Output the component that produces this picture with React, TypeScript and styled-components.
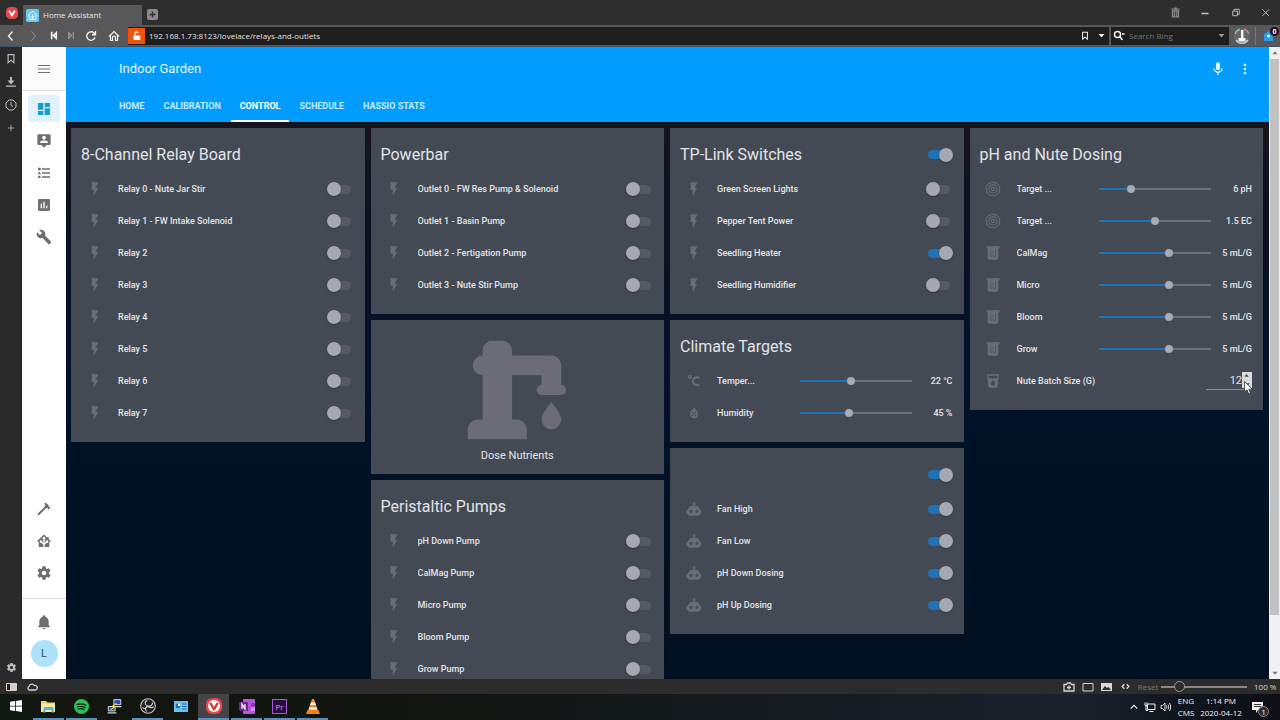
import React, { useState } from "react";
import styled, { createGlobalStyle, css } from "styled-components";

const GlobalStyle = createGlobalStyle`
  *, *::before, *::after { box-sizing: border-box; }
  body { margin: 0; background: #001024; font-family: Roboto, "Liberation Sans", sans-serif; }
  button { border: 0; padding: 0; margin: 0; background: none; color: inherit; font: inherit; cursor: pointer; }
  a { color: inherit; text-decoration: none; }
  input { margin: 0; font: inherit; color: inherit; }
  h1, h2 { margin: 0; font-weight: 400; }
  svg { display: block; flex: none; }
`;

const systemFont = `"Open Sans", "Noto Sans", sans-serif`;

const paths = {
  flash: "M7,2V13H10V22L17,10H13L17,2H7Z",
  robot:
    "M12,2A2,2 0 0,1 14,4C14,4.74 13.6,5.39 13,5.73V7H14A7,7 0 0,1 21,14H22A1,1 0 0,1 23,15V18A1,1 0 0,1 22,19H21V20A2,2 0 0,1 19,22H5A2,2 0 0,1 3,20V19H2A1,1 0 0,1 1,18V15A1,1 0 0,1 2,14H3A7,7 0 0,1 10,7H11V5.73C10.4,5.39 10,4.74 10,4A2,2 0 0,1 12,2M7.5,13A2.5,2.5 0 0,0 5,15.5A2.5,2.5 0 0,0 7.5,18A2.5,2.5 0 0,0 10,15.5A2.5,2.5 0 0,0 7.5,13M16.5,13A2.5,2.5 0 0,0 14,15.5A2.5,2.5 0 0,0 16.5,18A2.5,2.5 0 0,0 19,15.5A2.5,2.5 0 0,0 16.5,13Z",
  celsius:
    "M16.5,5C18.05,5 19.5,5.47 20.69,6.28L19.53,9.17C18.73,8.44 17.67,8 16.5,8C14,8 12,10 12,12.5C12,15 14,17 16.5,17C17.53,17 18.47,16.66 19.23,16.08L20.37,18.93C19.24,19.61 17.92,20 16.5,20A7.5,7.5 0 0,1 9,12.5A7.5,7.5 0 0,1 16.5,5M6,3A3,3 0 0,1 9,6A3,3 0 0,1 6,9A3,3 0 0,1 3,6A3,3 0 0,1 6,3M6,5A1,1 0 0,0 5,6A1,1 0 0,0 6,7A1,1 0 0,0 7,6A1,1 0 0,0 6,5Z",
  humidity:
    "M12,3.25C12,3.25 6,10 6,14C6,17.32 8.69,20 12,20A6,6 0 0,0 18,14C18,10 12,3.25 12,3.25M14.47,9.97L15.53,11.03L9.53,17.03L8.47,15.97M9.75,10A1.25,1.25 0 0,1 11,11.25A1.25,1.25 0 0,1 9.75,12.5A1.25,1.25 0 0,1 8.5,11.25A1.25,1.25 0 0,1 9.75,10M14.25,14.5A1.25,1.25 0 0,1 15.5,15.75A1.25,1.25 0 0,1 14.25,17A1.25,1.25 0 0,1 13,15.75A1.25,1.25 0 0,1 14.25,14.5Z",
  target:
    "M12,1A11,11 0 1,0 12,23A11,11 0 1,0 12,1M12,2.6A9.4,9.4 0 1,1 12,21.4A9.4,9.4 0 1,1 12,2.6M12,5A7,7 0 1,0 12,19A7,7 0 1,0 12,5M12,6.6A5.4,5.4 0 1,1 12,17.4A5.4,5.4 0 1,1 12,6.6M12,8.8A3.2,3.2 0 1,0 12,15.2A3.2,3.2 0 1,0 12,8.8M12,10.4A1.6,1.6 0 1,1 12,13.6A1.6,1.6 0 1,1 12,10.4Z",
  beaker:
    "M2,2H22V4A2,2 0 0,0 20,6V20A2,2 0 0,1 18,22H6A2,2 0 0,1 4,20V6A2,2 0 0,0 2,4V2M7,7V8H11V7H7M7,10V11H14V10H7M7,13V14H11V13H7M7,16V17H14V16H7M15.5,6V19H16.5V6H15.5Z",
  cup: "M18.32,8H5.67L5.23,4H18.77M12,19A3,3 0 0,1 9,16C9,14 12,10.6 12,10.6C12,10.6 15,14 15,16A3,3 0 0,1 12,19M3,2L5,20.23C5.13,21.23 5.97,22 7,22H17C18,22 18.87,21.23 19,20.23L21,2H3Z",
  pump: "M19,14.5C19,14.5 21,16.67 21,18A2,2 0 0,1 19,20A2,2 0 0,1 17,18C17,16.67 19,14.5 19,14.5M5,18V9A2,2 0 0,1 3,7A2,2 0 0,1 5,5V4A2,2 0 0,1 7,2H9A2,2 0 0,1 11,4V5H19A2,2 0 0,1 21,7V9L21,11A1,1 0 0,1 22,12A1,1 0 0,1 21,13H17A1,1 0 0,1 16,12A1,1 0 0,1 17,11V9H11V18H12A2,2 0 0,1 14,20V22H2V20A2,2 0 0,1 4,18H5Z",
  menu: "M3,6H21V7.6H3V6M3,11.2H21V12.8H3V11.2M3,16.4H21V18H3V16.4Z",
  dashboard: "M13,3V9H21V3M13,21H21V11H13M3,21H11V15H3M3,13H11V3H3V13Z",
  account:
    "M20,2H4A2,2 0 0,0 2,4V16A2,2 0 0,0 4,18H8L12,22L16,18H20A2,2 0 0,0 22,16V4A2,2 0 0,0 20,2M12,4.3C13.5,4.3 14.7,5.5 14.7,7C14.7,8.5 13.5,9.7 12,9.7C10.5,9.7 9.3,8.5 9.3,7C9.3,5.5 10.5,4.3 12,4.3M18,15H6V14.1C6,12.1 10,11 12,11C14,11 18,12.1 18,14.1V15Z",
  list: "M5,9.5L7.5,14H2.5L5,9.5M3,4H7V8H3V4M5,20A2,2 0 0,0 7,18A2,2 0 0,0 5,16A2,2 0 0,0 3,18A2,2 0 0,0 5,20M9,5V7H21V5H9M9,19H21V17H9V19M9,13H21V11H9V13Z",
  chart:
    "M17,17H15V13H17M13,17H11V7H13M9,17H7V10H9M19,3H5C3.89,3 3,3.89 3,5V19A2,2 0 0,0 5,21H19A2,2 0 0,0 21,19V5C21,3.89 20.1,3 19,3Z",
  wrench:
    "M22.7,19L13.6,9.9C14.5,7.6 14,4.9 12.1,3C10.1,1 7.1,0.6 4.7,1.7L9,6L6,9L1.6,4.7C0.4,7.1 0.9,10.1 2.9,12.1C4.8,14 7.5,14.5 9.8,13.6L18.9,22.7C19.3,23.1 19.9,23.1 20.3,22.7L22.6,20.4C23.1,20 23.1,19.3 22.7,19Z",
  hammer:
    "M2,19.63L13.43,8.2L12.72,7.5L14.14,6.07L12,3.89C13.2,2.7 15.09,2.7 16.27,3.89L19.87,7.5L18.45,8.91H21.29L22,9.62L18.45,13.21L17.74,12.5V9.62L16.27,11.04L15.56,10.33L4.13,21.76L2,19.63Z",
  hass: "M21.8,13H20V21H13V17.67L15.79,14.88L16.5,15C17.66,15 18.6,14.06 18.6,12.9C18.6,11.74 17.66,10.8 16.5,10.8A2.1,2.1 0 0,0 14.4,12.9L14.5,13.61L13,15.13V9.65C13.66,9.29 14.1,8.6 14.1,7.8A2.1,2.1 0 0,0 12,5.7A2.1,2.1 0 0,0 9.9,7.8C9.9,8.6 10.34,9.29 11,9.65V15.13L9.5,13.61L9.6,12.9A2.1,2.1 0 0,0 7.5,10.8A2.1,2.1 0 0,0 5.4,12.9A2.1,2.1 0 0,0 7.5,15L8.21,14.88L11,17.67V21H4V13H2.25C1.83,13 1.42,13 1.42,12.79C1.43,12.57 1.85,12.15 2.28,11.72L11,3C11.33,2.67 11.67,2.33 12,2.33C12.33,2.33 12.67,2.67 13,3L17,7V6H19V9L21.78,11.78C22.18,12.18 22.59,12.59 22.6,12.8C22.6,13 22.2,13 21.8,13Z",
  gear: "M12,15.5A3.5,3.5 0 0,1 8.5,12A3.5,3.5 0 0,1 12,8.5A3.5,3.5 0 0,1 15.5,12A3.5,3.5 0 0,1 12,15.5M19.43,12.97C19.47,12.65 19.5,12.33 19.5,12C19.5,11.67 19.47,11.34 19.43,11L21.54,9.37C21.73,9.22 21.78,8.95 21.66,8.73L19.66,5.27C19.54,5.05 19.27,4.96 19.05,5.05L16.56,6.05C16.04,5.66 15.5,5.32 14.87,5.07L14.5,2.42C14.46,2.18 14.25,2 14,2H10C9.75,2 9.54,2.18 9.5,2.42L9.13,5.07C8.5,5.32 7.96,5.66 7.44,6.05L4.95,5.05C4.73,4.96 4.46,5.05 4.34,5.27L2.34,8.73C2.21,8.95 2.27,9.22 2.46,9.37L4.57,11C4.53,11.34 4.5,11.67 4.5,12C4.5,12.33 4.53,12.65 4.57,12.97L2.46,14.63C2.27,14.78 2.21,15.05 2.34,15.27L4.34,18.73C4.46,18.95 4.73,19.03 4.95,18.95L7.44,17.94C7.96,18.34 8.5,18.68 9.13,18.93L9.5,21.58C9.54,21.82 9.75,22 10,22H14C14.25,22 14.46,21.82 14.5,21.58L14.87,18.93C15.5,18.67 16.04,18.34 16.56,17.94L19.05,18.95C19.27,19.03 19.54,18.95 19.66,18.73L21.66,15.27C21.78,15.05 21.73,14.78 21.54,14.63L19.43,12.97Z",
  bell: "M21,19V20H3V19L5,17V11C5,7.9 7.03,5.17 10,4.29C10,4.19 10,4.1 10,4A2,2 0 0,1 12,2A2,2 0 0,1 14,4C14,4.1 14,4.19 14,4.29C16.97,5.17 19,7.9 19,11V17L21,19M14,21A2,2 0 0,1 12,23A2,2 0 0,1 10,21",
  mic: "M12,2A3,3 0 0,1 15,5V11A3,3 0 0,1 12,14A3,3 0 0,1 9,11V5A3,3 0 0,1 12,2M19,11C19,14.53 16.39,17.44 13,17.93V21H11V17.93C7.61,17.44 5,14.53 5,11H7A5,5 0 0,0 12,16A5,5 0 0,0 17,11H19Z",
  dots: "M12,16A2,2 0 0,1 14,18A2,2 0 0,1 12,20A2,2 0 0,1 10,18A2,2 0 0,1 12,16M12,10A2,2 0 0,1 14,12A2,2 0 0,1 12,14A2,2 0 0,1 10,12A2,2 0 0,1 12,10M12,4A2,2 0 0,1 14,6A2,2 0 0,1 12,8A2,2 0 0,1 10,6A2,2 0 0,1 12,4Z",
  triangle: "M4,8H20L12,17Z",
  bookmark: "M5,2H19V22L12,16L5,22V2M7.4,4.4V17L12,13L16.6,17V4.4Z",
  download: "M10,2H14V9H19L12,17L5,9H10V2M2,19H22V21.5H2Z",
  trash: "M9,1H15V3H21V6H3V3H9V1M4,7H20V23H4V7M7.5,10V20H9V10H7.5M11.2,10V20H12.8V10H11.2M15,10V20H16.5V10H15Z",
};
type IconName = keyof typeof paths;

const Icon = ({ name, size = 16 }: { name: IconName; size?: number }) => (
  <svg width={size} height={size} viewBox="0 0 24 24" fill="currentColor" fillRule="evenodd" aria-hidden="true">
    <path d={paths[name]} />
  </svg>
);

const StrokeIcon = ({ d, size = 12, width = 2 }: { d: string; size?: number; width?: number }) => (
  <svg width={size} height={size} viewBox="0 0 24 24" fill="none" stroke="currentColor" strokeWidth={width} aria-hidden="true">
    <path d={d} />
  </svg>
);

/* ---------- browser chrome ---------- */

const Shell = styled.div`
  display: grid;
  grid-template-rows: 25px 22px minmax(0, 1fr) 15px 26px;
  height: 100vh;
  overflow: hidden;
`;

const TabStrip = styled.header`
  display: flex;
  align-items: stretch;
  background: #2e2e2e;
  color: #e6e6e6;
  font: 8px/12px ${systemFont};
`;

const BrandButton = styled.button`
  display: grid;
  place-items: center;
  width: 23px;
`;

const BrowserTab = styled.button`
  display: flex;
  align-items: center;
  gap: 4px;
  width: 119px;
  margin-top: 5px;
  padding-left: 3px;
  background: #58585a;
`;

const NewTab = styled.button`
  display: grid;
  place-items: center;
  align-self: center;
  width: 11px;
  height: 11px;
  margin: 4px auto 0 5px;
  border-radius: 2px;
  background: #8b8b8b;
  color: #2e2e2e;
`;

const WindowButton = styled.button<{ $dim?: boolean }>`
  display: grid;
  place-items: center;
  width: 30px;
  color: ${(p) => (p.$dim ? "#8a8a8a" : "#c4c4c4")};
`;

const AddressBar = styled.nav`
  display: flex;
  align-items: center;
  background: #58585a;
  border-bottom: 1px solid #3c5468;
  color: #f4f4f4;
  font: 8px/12px ${systemFont};
`;

const NavButton = styled.button<{ $width: number; $dim?: boolean }>`
  display: grid;
  place-items: center;
  width: ${(p) => p.$width}px;
  height: 18px;
  color: ${(p) => (p.$dim ? "#9a9a9a" : "#f4f4f4")};
`;

const Field = styled.div<{ $grow?: boolean }>`
  display: flex;
  align-items: center;
  height: 18px;
  margin-left: 2px;
  background: #1e1e1e;
  ${(p) =>
    p.$grow
      ? css`
          flex: 1;
        `
      : css`
          width: 118px;
          padding-left: 2px;
        `}
`;

const FieldInput = styled.input`
  flex: 1;
  min-width: 0;
  height: 16px;
  margin-left: 4px;
  padding: 0;
  border: 0;
  outline: 0;
  background: transparent;
  color: #e2e2e2;
  &::placeholder {
    color: #777;
    opacity: 1;
  }
`;

const SecurityBadge = styled.button`
  display: grid;
  place-items: center;
  width: 17px;
  height: 16px;
  background: #ee5410;
`;

const Portrait = styled.button`
  width: 16px;
  height: 16px;
  margin: 0 5px;
`;

const Extension = styled.button`
  position: relative;
  display: grid;
  place-items: center;
  width: 25px;
  height: 18px;
  border-left: 1px solid #77777a;
  color: #2b9be6;
`;

const ExtensionBadge = styled.span`
  position: absolute;
  top: 0;
  right: 1px;
  width: 9px;
  height: 9px;
  border-radius: 50%;
  background: #1d0b26;
  color: #fff;
  font: 700 7px/9px ${systemFont};
  text-align: center;
`;

const Middle = styled.div`
  display: grid;
  grid-template-columns: 22px 44px minmax(0, 1fr) 11px;
  min-height: 0;
`;

const Panel = styled.aside`
  display: flex;
  flex-direction: column;
  background: #2a2a2a;
  color: #bdbdbd;
`;

const PanelButton = styled.button<{ $bottom?: boolean }>`
  display: grid;
  place-items: center;
  height: 23px;
  ${(p) => p.$bottom && "margin-top: auto;"}
`;

const ScrollBar = styled.div`
  display: flex;
  flex-direction: column;
  align-items: center;
  background: #f1f1f1;
  color: #7a7a7a;
`;

const ScrollArrow = styled.button<{ $down?: boolean }>`
  display: grid;
  place-items: center;
  height: 12px;
  ${(p) => (p.$down ? "margin-top: auto;" : "transform: rotate(180deg);")}
`;

const ScrollThumb = styled.div`
  width: 9px;
  height: 88%;
  background: #c1c1c1;
`;

/* ---------- dashboard ---------- */

const Sidebar = styled.nav`
  display: flex;
  flex-direction: column;
  align-items: center;
  background: #fff;
  color: #6f6f6f;
`;

const SidebarTop = styled.div`
  display: grid;
  place-items: center;
  width: 100%;
  height: 44px;
  margin-bottom: 4px;
  background: #fafafa;
  border-bottom: 1px solid #dedede;
`;

const SidebarGroup = styled.div<{ $footer?: boolean }>`
  display: flex;
  flex-direction: column;
  align-items: center;
  gap: 5px;
  width: 100%;
  ${(p) =>
    p.$footer
      ? css`
          margin-top: 12px;
          padding: 9px 0 12px;
          border-top: 1px solid #dedede;
        `
      : css`
          &:nth-child(2) {
            margin-bottom: auto;
          }
        `}
`;

const SidebarLink = styled.a<{ $active?: boolean }>`
  display: grid;
  place-items: center;
  width: 32px;
  height: 27px;
  border-radius: 3px;
  background: ${(p) => (p.$active ? "#e0f3fd" : "transparent")};
  color: ${(p) => (p.$active ? "#149fd0" : "inherit")};
`;

const Avatar = styled.a`
  width: 27px;
  height: 27px;
  border-radius: 50%;
  background: #aee1fa;
  color: #33505e;
  font-size: 11px;
  line-height: 27px;
  text-align: center;
`;

const View = styled.main`
  display: flex;
  flex-direction: column;
  min-width: 0;
  min-height: 0;
  overflow: hidden;
  background: linear-gradient(#232429, #1b151d 30px, #0c1220 170px, #04112a 320px, #001226 400px, #001020);
`;

const ViewHeader = styled.header`
  flex: none;
  background: #019cfe;
  color: #e0f8ff;
`;

const Toolbar = styled.div`
  display: flex;
  align-items: center;
  height: 43px;
  padding: 0 11px 0 53px;
`;

const ViewTitle = styled.h1`
  flex: 1;
  font-size: 13px;
  line-height: 16px;
`;

const ToolButton = styled.button`
  display: grid;
  place-items: center;
  width: 27px;
  height: 27px;
`;

const Tabs = styled.nav`
  display: flex;
  gap: 1px;
  height: 32px;
  padding-left: 44px;
`;

const Tab = styled.a<{ $active?: boolean }>`
  padding: 0 9px;
  border-bottom: 2px solid ${(p) => (p.$active ? "#fff" : "transparent")};
  color: ${(p) => (p.$active ? "#fff" : "#c4ecff")};
  font-size: 9px;
  font-weight: 700;
  line-height: 32px;
  text-transform: uppercase;
`;

const Columns = styled.div`
  display: grid;
  grid-template-columns: repeat(4, minmax(0, 1fr));
  align-items: start;
  gap: 6px;
  padding: 6px 6px 6px 5px;
`;

const Column = styled.div`
  display: grid;
  gap: 6px;
`;

const Card = styled.section`
  padding-bottom: 13px;
  background: #444a54;
  color: #e3e4e8;
  font-size: 9px;
  line-height: 12px;
`;

const CardHeader = styled.div`
  display: flex;
  align-items: center;
  justify-content: space-between;
  height: 45px;
  padding: 8px 11px 0 10px;
`;

const CardTitle = styled.h2`
  font-size: 16px;
  line-height: 24px;
`;

const Row = styled.label`
  display: flex;
  align-items: center;
  height: 32px;
  padding: 0 11px 0 10px;
  font-weight: 500;
`;

const RowIcon = styled.span`
  display: grid;
  place-items: center;
  width: 27px;
  margin-right: 10px;
  color: #6b6c76;
`;

const RowName = styled.span`
  flex: 1;
  min-width: 0;
  overflow: hidden;
  text-overflow: ellipsis;
  white-space: nowrap;
`;

const Switch = styled.input.attrs({ type: "checkbox" })`
  appearance: none;
  display: grid;
  grid-template-columns: 27px;
  align-items: center;
  height: 14px;
  cursor: pointer;
  &::before,
  &::after {
    content: "";
    grid-area: 1 / 1;
  }
  &::before {
    justify-self: center;
    width: 22px;
    height: 9px;
    border-radius: 5px;
    background: #575a65;
  }
  &::after {
    width: 14px;
    height: 14px;
    border-radius: 50%;
    background: #a7a7b0;
    box-shadow: 0 1px 2px rgba(0, 0, 0, 0.35);
  }
  &:checked::before {
    background: #1e71b4;
  }
  &:checked::after {
    justify-self: end;
  }
`;

const Slider = styled.input.attrs({ type: "range" })`
  appearance: none;
  width: 112px;
  height: 14px;
  background: transparent;
  &::-webkit-slider-runnable-track {
    height: 2px;
    background: linear-gradient(90deg, #2272b4 var(--fill), #6e6f78 var(--fill));
  }
  &::-webkit-slider-thumb {
    appearance: none;
    width: 8px;
    height: 8px;
    margin-top: -3px;
    border-radius: 50%;
    background: #a7a9b3;
  }
`;

const SliderValue = styled.output`
  width: 41px;
  text-align: right;
  white-space: nowrap;
`;

const NumberBox = styled.span`
  position: relative;
  display: flex;
  align-items: flex-start;
  width: 46px;
  height: 18px;
  border-bottom: 1px solid #8b8d95;
`;

const NumberInput = styled.input.attrs({ type: "number" })`
  appearance: textfield;
  flex: 1;
  min-width: 0;
  height: 16px;
  padding: 0;
  border: 0;
  outline: 0;
  background: transparent;
  font-size: 11px;
  font-weight: 400;
  text-align: right;
  &::-webkit-inner-spin-button {
    display: none;
  }
`;

const Spinner = styled.span`
  display: grid;
  grid-template-rows: 1fr 1fr;
  width: 10px;
  height: 16px;
  background: #dcdcdc;
  color: #555;
`;

const SpinButton = styled.button<{ $up?: boolean }>`
  display: grid;
  place-items: center;
  ${(p) => p.$up && "transform: rotate(180deg);"}
`;

const Pointer = styled.span`
  position: absolute;
  top: 9px;
  left: 38px;
`;

const ButtonCard = styled.button`
  display: grid;
  justify-items: center;
  padding: 11px;
  background: #444a54;
  color: #e3e4e8;
  font-size: 11px;
  line-height: 14px;
  & > svg {
    color: #6b6c76;
  }
`;

/* ---------- bottom bars ---------- */

const StatusBar = styled.footer`
  display: flex;
  align-items: center;
  background: #2c2c2c;
  color: #d6d6d6;
  font: 8px/12px ${systemFont};
`;

const StatusButton = styled.button<{ $width: number }>`
  display: grid;
  place-items: center;
  width: ${(p) => p.$width}px;
`;

const StatusSpacer = styled.span`
  flex: 1;
`;

const ResetButton = styled.button`
  width: 26px;
  color: #7b7b7b;
`;

const Zoom = styled.input.attrs({ type: "range" })`
  appearance: none;
  width: 86px;
  height: 12px;
  background: transparent;
  &::-webkit-slider-runnable-track {
    height: 2px;
    background: #8f8787;
  }
  &::-webkit-slider-thumb {
    appearance: none;
    width: 11px;
    height: 11px;
    margin-top: -5px;
    border: 1px solid #a09a9a;
    border-radius: 50%;
    background: #2c2c2c;
  }
`;

const ZoomValue = styled.output`
  width: 33px;
  padding-left: 7px;
  white-space: nowrap;
`;

const TaskBar = styled.footer`
  display: flex;
  background: linear-gradient(90deg, #111712, #12150f 30%, #141a20 60%, #1a212b 84%, #11161e 92%, #0c1016);
  color: #f2f2f2;
  font: 8px/12px ${systemFont};
`;

const TaskButton = styled.button<{ $running?: boolean; $active?: boolean }>`
  display: grid;
  place-items: center;
  width: 31px;
  margin-right: 2px;
  background: ${(p) => (p.$active ? "#444446" : "transparent")};
  border-bottom: 2px solid ${(p) => (p.$running ? "#5a8fbf" : "transparent")};
`;

const Tray = styled.div`
  display: flex;
  align-items: center;
  margin-left: auto;
`;

const TrayButton = styled.button`
  display: grid;
  place-items: center;
  width: 16px;
`;

const TrayText = styled.div<{ $width: number }>`
  width: ${(p) => p.$width}px;
  text-align: center;
  white-space: nowrap;
`;

const Notifications = styled.button`
  position: relative;
  width: 36px;
  padding-left: 8px;
`;

const NotificationBadge = styled.span`
  position: absolute;
  top: 4px;
  left: 14px;
  width: 11px;
  height: 11px;
  border-radius: 50%;
  border: 1px solid #8a8a8a;
  background: #2b2b2d;
  font-size: 8px;
  line-height: 9px;
`;

/* ---------- drawings ---------- */

const VivaldiLogo = ({ size }: { size: number }) => (
  <svg width={size} height={size} viewBox="0 0 24 24" aria-hidden="true">
    <rect width="24" height="24" rx="9" fill="#e8464a" />
    <circle cx="12" cy="12" r="9" fill={size > 13 ? "#fff" : "#e8464a"} />
    <path
      d="M7 8.5L12 17L17 8.5"
      fill="none"
      stroke={size > 13 ? "#d63a3e" : "#fff"}
      strokeWidth="3.6"
      strokeLinecap="round"
      strokeLinejoin="round"
    />
  </svg>
);

const appIcons = {
  Start: (
    <svg width="12" height="12" viewBox="0 0 12 12" fill="#fff">
      <path d="M0 1.7L5.2 1V5.7H0ZM6 .9L12 0V5.7H6ZM0 6.4H5.2V11L0 10.3ZM6 6.4H12V12L6 11.1Z" />
    </svg>
  ),
  "File Explorer": (
    <svg width="15" height="13" viewBox="0 0 15 13">
      <path d="M0 1H5L6.5 2.5H14V12H0Z" fill="#f4d478" />
      <path d="M0 4H14V12H0Z" fill="#fbe7a0" />
      <path d="M3 7H12L13 12.5H10.5V10H4.5V12.5H2Z" fill="#56b7d8" />
    </svg>
  ),
  Spotify: (
    <svg width="15" height="15" viewBox="0 0 24 24">
      <circle cx="12" cy="12" r="12" fill="#2ebd59" />
      <path d="M5 8.6C9.5 7.3 15 7.7 19 10M5.8 12.4C9.6 11.4 14 11.8 17.4 13.8M6.6 16C9.8 15.2 13 15.5 15.9 17.2" fill="none" stroke="#10240f" strokeWidth="2" strokeLinecap="round" />
    </svg>
  ),
  PuTTY: (
    <svg width="15" height="15" viewBox="0 0 24 24">
      <path d="M11 1H22V9H11ZM2 12H13V19H2Z" fill="#2b4bb5" stroke="#d5d5d5" strokeWidth="1.6" />
      <path d="M13 11H23V13H13ZM1 21H15V23H1Z" fill="#d5d5d5" />
      <path d="M15 7L8 12H13L6 17" fill="none" stroke="#f3e04a" strokeWidth="1.8" />
    </svg>
  ),
  "OBS Studio": (
    <svg width="16" height="16" viewBox="0 0 24 24">
      <circle cx="12" cy="12" r="11" fill="#1f1f21" stroke="#c9c9c9" strokeWidth="1.6" />
      <path d="M11 4C6.5 5 7 11 11.5 12C15 13 20 10.5 18.5 6.5M11.5 12C8 13 7 17.5 10 20.5M11.5 12C14 14.5 18.5 15.5 20.5 13M3.8 14C6 17 9.5 16 11.5 12" fill="none" stroke="#c9c9c9" strokeWidth="1.7" />
    </svg>
  ),
  "Control Panel": (
    <svg width="14" height="11" viewBox="0 0 14 11">
      <rect width="14" height="11" fill="#6cc2ee" />
      <circle cx="4" cy="5" r="2.4" fill="#1e6fb0" />
      <path d="M4 5V2.6A2.4 2.4 0 0 1 6.4 5Z" fill="#fff" />
      <path d="M8 3H12.5M8 5.5H12.5M8 8H12.5" stroke="#1e6fb0" strokeWidth="1" />
    </svg>
  ),
  Vivaldi: <VivaldiLogo size={16} />,
  OneNote: (
    <svg width="16" height="15" viewBox="0 0 16 15">
      <path d="M4 0H15A1 1 0 0 1 16 1V14A1 1 0 0 1 15 15H4Z" fill="#b558d8" />
      <path d="M12 4H16V8H12Z" fill="#8b3cb8" />
      <path d="M12 8H16V12H12Z" fill="#d08cf0" />
      <rect y="3" width="9" height="9" rx="1" fill="#6d2298" />
      <path d="M3 10V5L6 10V5" fill="none" stroke="#fff" strokeWidth="1.2" />
    </svg>
  ),
  "Premiere Pro": (
    <svg width="15" height="15" viewBox="0 0 15 15">
      <rect x=".5" y=".5" width="14" height="14" fill="#2a0a3a" stroke="#a45bd6" />
      <text x="7.5" y="10.5" fill="#d79bff" fontFamily="Open Sans" fontSize="8" textAnchor="middle">Pr</text>
    </svg>
  ),
  VLC: (
    <svg width="14" height="15" viewBox="0 0 14 15">
      <path d="M6 0H8L12 12H2Z" fill="#f58a1f" />
      <path d="M4.9 3.5H9.1L9.9 6H4.1ZM3.3 8.5H10.7L11.4 10.5H2.6Z" fill="#f4f0ea" />
      <path d="M1.5 11H12.5L14 15H0Z" fill="#f0851a" />
    </svg>
  ),
};

/* ---------- rows ---------- */

const SwitchRow = ({ icon = "flash", name, on = false }: { icon?: IconName; name: string; on?: boolean }) => (
  <Row>
    <RowIcon>
      <Icon name={icon} />
    </RowIcon>
    <RowName>{name}</RowName>
    <Switch defaultChecked={on} />
  </Row>
);

interface SliderRowProps {
  icon: IconName;
  name: string;
  value: string;
  percent: number;
}

const SliderRow = ({ icon, name, value, percent }: SliderRowProps) => {
  const [position, setPosition] = useState(percent);
  return (
    <Row>
      <RowIcon>
        <Icon name={icon} />
      </RowIcon>
      <RowName>{name}</RowName>
      <Slider
        value={position}
        onChange={(e) => setPosition(Number(e.target.value))}
        style={{ "--fill": `${position}%` } as React.CSSProperties}
      />
      <SliderValue>{value}</SliderValue>
    </Row>
  );
};

const navItems: { icon: IconName; label: string }[] = [
  { icon: "dashboard", label: "Overview" },
  { icon: "account", label: "Map" },
  { icon: "list", label: "Logbook" },
  { icon: "chart", label: "History" },
  { icon: "wrench", label: "Configurator" },
];
const toolItems: { icon: IconName; label: string }[] = [
  { icon: "hammer", label: "Developer Tools" },
  { icon: "hass", label: "Supervisor" },
  { icon: "gear", label: "Configuration" },
];
const running = ["File Explorer", "Spotify", "OBS Studio", "Vivaldi", "OneNote", "Premiere Pro", "VLC"];

const App = () => (
  <>
    <GlobalStyle />
    <Shell>
      <TabStrip>
        <BrandButton aria-label="Vivaldi menu">
          <VivaldiLogo size={12} />
        </BrandButton>
        <BrowserTab>
          <svg width="13" height="13" viewBox="0 0 24 24" aria-hidden="true">
            <rect width="24" height="24" rx="3" fill="#6fc4ea" />
            <path d="M12 4L20 12H18V19H6V12H4Z" fill="none" stroke="#fff" strokeWidth="1.6" />
            <path d="M12 18V10M12 16L9 13M12 16L15 13" stroke="#fff" strokeWidth="1.8" />
          </svg>
          Home Assistant
        </BrowserTab>
        <NewTab aria-label="New tab">
          <StrokeIcon d="M12 4V20M4 12H20" size={9} width={4} />
        </NewTab>
        <WindowButton $dim aria-label="Closed tabs">
          <Icon name="trash" size={11} />
        </WindowButton>
        <WindowButton aria-label="Minimize">
          <StrokeIcon d="M5 13H19" width={3} />
        </WindowButton>
        <WindowButton aria-label="Restore">
          <StrokeIcon d="M6 9H16V19H6ZM9 9V5H20V16H16" size={11} />
        </WindowButton>
        <WindowButton aria-label="Close">
          <StrokeIcon d="M5 5L20 20M20 5L5 20" size={11} />
        </WindowButton>
      </TabStrip>

      <AddressBar>
        <NavButton $width={22} aria-label="Back">
          <StrokeIcon d="M15 3L7 12L15 21" width={2.6} />
        </NavButton>
        <NavButton $width={22} $dim aria-label="Forward">
          <StrokeIcon d="M9 3L17 12L9 21" />
        </NavButton>
        <NavButton $width={19} aria-label="Rewind">
          <StrokeIcon d="M8 4V20M18 6L12 12L18 18Z" size={11} width={3.6} />
        </NavButton>
        <NavButton $width={17} $dim aria-label="Fast forward">
          <StrokeIcon d="M16 4V20M6 6L12 12L6 18Z" size={11} width={2.6} />
        </NavButton>
        <NavButton $width={22} aria-label="Reload">
          <StrokeIcon d="M20 15A8.5 8.5 0 1 1 18 6L21 9M21 2V9.5H14" width={2.6} />
        </NavButton>
        <NavButton $width={24} aria-label="Home">
          <StrokeIcon d="M2 13L12 3L22 13M5 11V21H9V15A3 3 0 0 1 15 15V21H19V11" width={2.4} />
        </NavButton>
        <Field $grow>
          <SecurityBadge aria-label="Site information">
            <svg width="9" height="9" viewBox="0 0 12 12" aria-hidden="true">
              <path d="M2 6H11V12H2Z" fill="#fff" />
              <path d="M4 6V3.5A2 2 0 0 1 8 3" fill="none" stroke="#fff" strokeWidth="1.6" />
            </svg>
          </SecurityBadge>
          <FieldInput aria-label="Address" defaultValue="192.168.1.73:8123/lovelace/relays-and-outlets" />
          <NavButton $width={16} aria-label="Bookmark page">
            <Icon name="bookmark" size={10} />
          </NavButton>
          <NavButton $width={16} aria-label="Bookmarks">
            <Icon name="triangle" size={9} />
          </NavButton>
        </Field>
        <Field>
          <StrokeIcon d="M15 9A6 6 0 1 1 3 9A6 6 0 1 1 15 9ZM13 13L19 20M18 8H23" width={3} />
          <FieldInput aria-label="Search" placeholder="Search Bing" />
          <NavButton $width={16} $dim aria-label="Search engines">
            <Icon name="triangle" size={9} />
          </NavButton>
        </Field>
        <Portrait aria-label="Profile">
          <svg width="16" height="16" viewBox="0 0 16 16" aria-hidden="true">
            <circle cx="8" cy="8" r="8" fill="#6a6668" />
            <path d="M1 6A7.2 7.2 0 0 1 6 1.2" fill="none" stroke="#8fc0b4" strokeWidth="1.4" />
            <path d="M10 1.2A7.2 7.2 0 0 1 15 6" fill="none" stroke="#b58aa0" strokeWidth="1.4" />
            <path d="M7 2H9.4V10H11.5V13.5H4.5V10H7Z" fill="#fff" />
            <path d="M2 12A7.2 7.2 0 0 0 14 12" fill="none" stroke="#b8ccc8" strokeWidth="1.6" />
          </svg>
        </Portrait>
        <Extension aria-label="Extension">
          <svg width="9" height="10" viewBox="0 0 9 10" aria-hidden="true">
            <path d="M0 3L4.5 0L9 3V10H0Z" fill="currentColor" />
            <circle cx="4.5" cy="5" r="1.5" fill="#e4f4ff" />
          </svg>
          <ExtensionBadge>0</ExtensionBadge>
        </Extension>
      </AddressBar>

      <Middle>
        <Panel>
          <PanelButton aria-label="Bookmarks">
            <Icon name="bookmark" size={12} />
          </PanelButton>
          <PanelButton aria-label="Downloads">
            <Icon name="download" size={12} />
          </PanelButton>
          <PanelButton aria-label="History">
            <StrokeIcon d="M8 2H16L22 8V16L16 22H8L2 16V8ZM12 6V13L16 15" />
          </PanelButton>
          <PanelButton aria-label="Add web panel">
            <StrokeIcon d="M12 5V19M5 12H19" size={10} />
          </PanelButton>
          <PanelButton $bottom aria-label="Settings">
            <Icon name="gear" size={11} />
          </PanelButton>
        </Panel>

        <Sidebar>
          <SidebarTop>
            <button aria-label="Toggle sidebar">
              <Icon name="menu" />
            </button>
          </SidebarTop>
          <SidebarGroup>
            {navItems.map((item, i) => (
              <SidebarLink key={item.label} href="#" aria-label={item.label} $active={i === 0}>
                <Icon name={item.icon} />
              </SidebarLink>
            ))}
          </SidebarGroup>
          <SidebarGroup>
            {toolItems.map((item) => (
              <SidebarLink key={item.label} href="#" aria-label={item.label}>
                <Icon name={item.icon} />
              </SidebarLink>
            ))}
          </SidebarGroup>
          <SidebarGroup $footer>
            <SidebarLink href="#" aria-label="Notifications">
              <Icon name="bell" />
            </SidebarLink>
            <Avatar href="#">L</Avatar>
          </SidebarGroup>
        </Sidebar>

        <View>
          <ViewHeader>
            <Toolbar>
              <ViewTitle>Indoor Garden</ViewTitle>
              <ToolButton aria-label="Voice command">
                <Icon name="mic" />
              </ToolButton>
              <ToolButton aria-label="Menu">
                <Icon name="dots" />
              </ToolButton>
            </Toolbar>
            <Tabs>
              {["Home", "Calibration", "Control", "Schedule", "Hassio Stats"].map((tab) => (
                <Tab key={tab} href="#" $active={tab === "Control"}>
                  {tab}
                </Tab>
              ))}
            </Tabs>
          </ViewHeader>

          <Columns>
            <Column>
              <Card>
                <CardHeader>
                  <CardTitle>8-Channel Relay Board</CardTitle>
                </CardHeader>
                <SwitchRow name="Relay 0 - Nute Jar Stir" />
                <SwitchRow name="Relay 1 - FW Intake Solenoid" />
                {[2, 3, 4, 5, 6, 7].map((n) => (
                  <SwitchRow key={n} name={`Relay ${n}`} />
                ))}
              </Card>
            </Column>

            <Column>
              <Card>
                <CardHeader>
                  <CardTitle>Powerbar</CardTitle>
                </CardHeader>
                <SwitchRow name="Outlet 0 - FW Res Pump & Solenoid" />
                <SwitchRow name="Outlet 1 - Basin Pump" />
                <SwitchRow name="Outlet 2 - Fertigation Pump" />
                <SwitchRow name="Outlet 3 - Nute Stir Pump" />
              </Card>
              <ButtonCard>
                <Icon name="pump" size={118} />
                Dose Nutrients
              </ButtonCard>
              <Card>
                <CardHeader>
                  <CardTitle>Peristaltic Pumps</CardTitle>
                </CardHeader>
                {["pH Down", "CalMag", "Micro", "Bloom", "Grow"].map((n) => (
                  <SwitchRow key={n} name={`${n} Pump`} />
                ))}
              </Card>
            </Column>

            <Column>
              <Card>
                <CardHeader>
                  <CardTitle>TP-Link Switches</CardTitle>
                  <Switch defaultChecked aria-label="All TP-Link switches" />
                </CardHeader>
                <SwitchRow name="Green Screen Lights" />
                <SwitchRow name="Pepper Tent Power" />
                <SwitchRow name="Seedling Heater" on />
                <SwitchRow name="Seedling Humidifier" />
              </Card>
              <Card>
                <CardHeader>
                  <CardTitle>Climate Targets</CardTitle>
                </CardHeader>
                <SliderRow icon="celsius" name="Temper..." value="22 °C" percent={46} />
                <SliderRow icon="humidity" name="Humidity" value="45 %" percent={44} />
              </Card>
              <Card>
                <CardHeader>
                  <span />
                  <Switch defaultChecked aria-label="All automations" />
                </CardHeader>
                {["Fan High", "Fan Low", "pH Down Dosing", "pH Up Dosing"].map((n) => (
                  <SwitchRow key={n} icon="robot" name={n} on />
                ))}
              </Card>
            </Column>

            <Column>
              <Card>
                <CardHeader>
                  <CardTitle>pH and Nute Dosing</CardTitle>
                </CardHeader>
                <SliderRow icon="target" name="Target ..." value="6 pH" percent={27} />
                <SliderRow icon="target" name="Target ..." value="1.5 EC" percent={50} />
                {["CalMag", "Micro", "Bloom", "Grow"].map((n) => (
                  <SliderRow key={n} icon="beaker" name={n} value="5 mL/G" percent={63} />
                ))}
                <Row>
                  <RowIcon>
                    <Icon name="cup" />
                  </RowIcon>
                  <RowName>Nute Batch Size (G)</RowName>
                  <NumberBox>
                    <NumberInput defaultValue={12} />
                    <Spinner>
                      <SpinButton $up aria-label="Increase">
                        <Icon name="triangle" size={7} />
                      </SpinButton>
                      <SpinButton aria-label="Decrease">
                        <Icon name="triangle" size={7} />
                      </SpinButton>
                    </Spinner>
                    <Pointer>
                      <svg width="9" height="14" viewBox="0 0 9 14" aria-hidden="true">
                        <path d="M.5 .5V11L3 8.8L4.8 13L6.5 12.2L4.8 8.2H8.3Z" fill="#fff" stroke="#222" strokeWidth=".7" />
                      </svg>
                    </Pointer>
                  </NumberBox>
                </Row>
              </Card>
            </Column>
          </Columns>
        </View>

        <ScrollBar>
          <ScrollArrow aria-label="Scroll up">
            <Icon name="triangle" size={8} />
          </ScrollArrow>
          <ScrollThumb />
          <ScrollArrow $down aria-label="Scroll down">
            <Icon name="triangle" size={8} />
          </ScrollArrow>
        </ScrollBar>
      </Middle>

      <StatusBar>
        <StatusButton $width={23} aria-label="Toggle panel">
          <svg width="11" height="8" viewBox="0 0 11 8" aria-hidden="true">
            <rect width="11" height="8" rx="1" fill="#d8cfc8" />
            <rect x="1" y="1" width="3" height="6" fill="#222" />
          </svg>
        </StatusButton>
        <StatusButton $width={18} aria-label="Sync">
          <StrokeIcon d="M6 18A4 4 0 0 1 6 11A6 6 0 0 1 17 9A4.5 4.5 0 0 1 19 18Z" width={2.6} />
        </StatusButton>
        <StatusSpacer />
        <StatusButton $width={18} aria-label="Capture page">
          <StrokeIcon d="M2 7H7L9 4H15L17 7H22V20H2ZM12 9V17M8 13H16" width={2.6} />
        </StatusButton>
        <StatusButton $width={19} aria-label="Tile tabs">
          <StrokeIcon d="M2 5H22V20H2Z" />
        </StatusButton>
        <StatusButton $width={19} aria-label="Toggle images">
          <svg width="11" height="8" viewBox="0 0 11 8" aria-hidden="true">
            <rect width="11" height="8" fill="#d8d8d8" />
            <path d="M1 7L4 3L6 5L7.5 4L10 7Z" fill="#2c2c2c" />
          </svg>
        </StatusButton>
        <StatusButton $width={19} aria-label="Page actions">
          <StrokeIcon d="M9 6L3 12L9 18M15 6L21 12L15 18" size={9} width={3.6} />
        </StatusButton>
        <ResetButton>Reset</ResetButton>
        <Zoom defaultValue={17} aria-label="Page zoom" />
        <ZoomValue>100 %</ZoomValue>
      </StatusBar>

      <TaskBar>
        {Object.entries(appIcons).map(([name, icon]) => (
          <TaskButton key={name} aria-label={name} $running={running.includes(name)} $active={name === "Vivaldi"}>
            {icon}
          </TaskButton>
        ))}
        <Tray>
          <TrayButton aria-label="Show hidden icons">
            <StrokeIcon d="M4 16L12 8L20 16" size={10} width={2.6} />
          </TrayButton>
          <TrayButton aria-label="Network">
            <StrokeIcon d="M7 6H22V17H7ZM11 21H19M2 3V9H6V3M4 9V19H8" width={2} />
          </TrayButton>
          <TrayButton aria-label="Volume">
            <StrokeIcon d="M2 9H5L10 4V20L5 15H2ZM13 9C14 11 14 13 13 15M16 7C18 10 18 14 16 17M19 4C22 9 22 15 19 20" width={1.8} />
          </TrayButton>
          <TrayText $width={24}>
            ENG
            <br />
            CMS
          </TrayText>
          <TrayText $width={46}>
            1:14 PM
            <br />
            2020-04-12
          </TrayText>
          <Notifications aria-label="Notifications, 1 new">
            <svg width="12" height="11" viewBox="0 0 12 11" aria-hidden="true">
              <path d="M0 0H11V8H6L4 11V8H0Z" fill="#f2f2f2" />
              <path d="M2 2.5H9M2 4.5H9" stroke="#333" strokeWidth="1" />
            </svg>
            <NotificationBadge>1</NotificationBadge>
          </Notifications>
        </Tray>
      </TaskBar>
    </Shell>
  </>
);

export default App;
